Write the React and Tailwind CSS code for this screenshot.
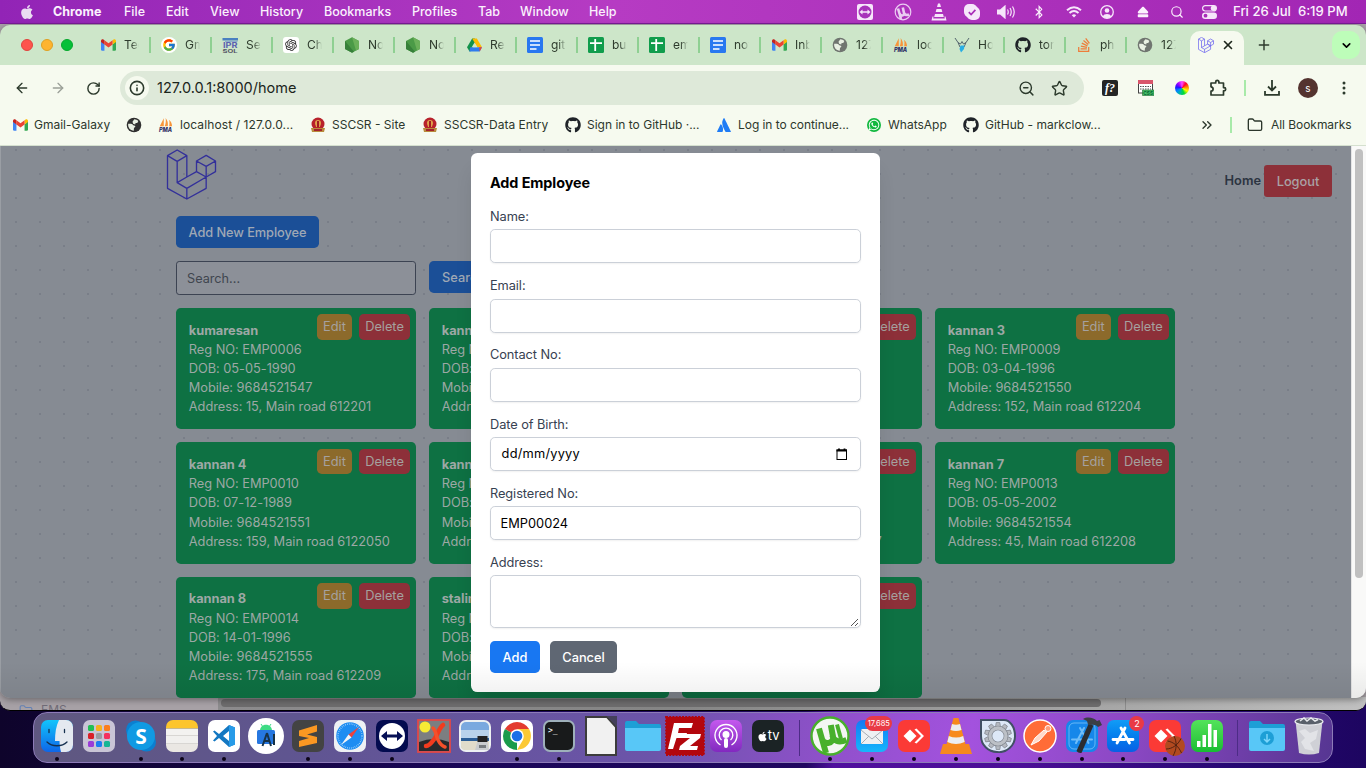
import React from "react";
import { FaApple, FaGithub, FaStackOverflow, FaAtlassian, FaWhatsapp, FaBluetoothB, FaEject } from "react-icons/fa";
import { FcGoogle } from "react-icons/fc";
import { RiOpenaiFill } from "react-icons/ri";
import { ArrowLeft, ArrowRight, RotateCw, Info, ZoomOut, Star, Folder, Search, Plus, X, ChevronDown, ChevronsRight } from "lucide-react";

/* ---------- small brand icons ---------- */

const Gmail = () => (
  <svg viewBox="0 0 24 18" className="w-[15px] h-3">
    <path d="M0 2v14a2 2 0 0 0 2 2h3.500V8z" fill="#4285f4" />
    <path d="M24 2v14a2 2 0 0 1-2 2h-3.500V8z" fill="#34a853" />
    <path d="M18.500 1.200V8L24 4V2.500C24 .2 21.500-.8 19.700.4z" fill="#fbbc04" />
    <path d="M5.500 8V1.200L12 6l6.500-4.800V8L12 13z" fill="#ea4335" />
    <path d="M0 2.500V4l5.500 4V1.200L4.300.4C2.500-.8 0 .2 0 2.500z" fill="#c5221f" />
  </svg>
);

const Globe = ({ color = "#303030" }) => (
  <svg viewBox="0 0 16 16" className="w-4 h-4">
    <circle cx="8" cy="8" r="7.300" fill={color} />
    <path d="M2.200 6.800c1.500-.2 4.300-.3 4.600.9.200 1 2.300.3 2.500 1.600.2 1.100-1.300 1-1.400 2.200l-.1 2.200C4.300 13.700 1.600 10.600 2.200 6.800zM8.300 2.300c1.600.1 3 .7 4 1.800l-1 1.800H9.600L9.200 7.400 7.100 6.800 6.500 4.800z" fill="#e8efe2" />
  </svg>
);

const Pma = () => (
  <svg viewBox="0 0 18 16" className="w-[17px] h-4">
    <path d="M6.500.5 2 9.500h4.500zM8.500 0c2.500 3 3 6 2.500 9.500H7.500C8.700 6.500 9.200 3 8.500 0zM12.500 2c2.300 2 3.300 4.500 3.300 7.500H12.500c.5-2.500.6-5 0-7.500z" fill="#f7953a" />
    <text x="1" y="15.800" fontSize="6.500" fontWeight="800" fontStyle="italic" fontFamily="Inter, sans-serif" fill="#2b2d63" textLength="15" lengthAdjust="spacingAndGlyphs">PMA</text>
  </svg>
);

const Node = () => (
  <svg viewBox="0 0 16 16" className="w-4 h-4">
    <path d="M8 .2 15 4v8l-7 3.800L1 12V4z" fill="#4b9a47" />
    <path d="M8 .2 15 4v8l-3 1.600z" fill="#6bb05a" />
    <path d="M1 4v8l7 3.800 2-1z" fill="#37803a" />
  </svg>
);

const Drive = () => (
  <svg viewBox="0 0 16 14" className="w-[15px] h-[14px]">
    <path d="M5.500 0h2.700L10 3 4.500 13.500 2.700 14 0 9.500z" fill="#12924a" />
    <path d="M5.500 0h5L16 9.500h-5z" fill="#fbbc04" />
    <path d="M3.500 9.500H16L13.500 14h-11z" fill="#2f7bed" />
    <path d="M13 9.500h3L13.500 14z" fill="#ea4335" />
    <path d="M8 4.300 11 9.500H5z" fill="#cfe7cb" />
  </svg>
);

const Docs = () => (
  <svg viewBox="0 0 16 16" className="w-4 h-4">
    <rect width="16" height="16" rx="1.500" fill="#2878f0" />
    <path d="M3 4h10M3 8h10M3 12h6.500" stroke="#fff" strokeWidth="1.700" />
  </svg>
);

const Sheets = () => (
  <svg viewBox="0 0 16 16" className="w-4 h-4">
    <rect width="16" height="16" rx="1.500" fill="#109d4c" />
    <path d="M2 6.200h12M7.200 2v12" stroke="#fff" strokeWidth="1.800" />
  </svg>
);

const Ipr = () => (
  <svg viewBox="0 0 16 16" className="w-4 h-4">
    <path d="M.5 1H16v2.500H.5z" fill="#4a80c0" /><path d="M3 4.200h12.500v.8H3z" fill="#7a9ccb" />
    <text x="1" y="11.200" fontSize="7" fontWeight="700" fontFamily="Inter, sans-serif" fill="#5a62b0" textLength="14.500" lengthAdjust="spacingAndGlyphs">IPR</text>
    <text x="0.500" y="15.900" fontSize="5" fontWeight="700" fontFamily="Inter, sans-serif" fill="#556" textLength="15" lengthAdjust="spacingAndGlyphs">SOL</text>
  </svg>
);

const Gpt = () => (
  <span className="flex items-center justify-center w-4 h-4 rounded-[3px] bg-white"><RiOpenaiFill className="w-[14px] h-[14px] text-[#222]" /></span>
);

const GoogleRound = () => (
  <span className="flex items-center justify-center w-4 h-4 rounded-full bg-white"><FcGoogle className="w-[14px] h-[14px]" /></span>
);

const Github = () => <FaGithub className="w-4 h-4 text-[#1f2328]" />;
const Stack = () => <FaStackOverflow className="w-4 h-4 text-[#ee7d3a]" />;

const Hoppers = () => (
  <svg viewBox="0 0 16 16" className="w-4 h-4" fill="none">
    <path d="M1 1l3 4.500L6 10M15 1l-3 4.500L10 10M4 5.500 6.500 7 8 4.500 9.500 7 12 5.500" stroke="#54656e" strokeWidth="1" />
    <path d="M6.500 8.500h4L10 12l-3 3.500L5.500 12z" fill="#28aee4" />
  </svg>
);

const Emblem = () => (
  <svg viewBox="0 0 16 16" className="w-4 h-4">
    <circle cx="8" cy="7" r="6.500" fill="#b8222b" />
    <path d="M5 6a3 3 0 0 1 6 0c0 2-1 2.500-1 4H6C6 8.500 5 8 5 6z" fill="#e0a24a" />
    <path d="M7 4h2v6H7z" fill="#a31a22" />
    <path d="M1 11h14l-1 4H2z" fill="#b98b3c" />
    <path d="M4 12h8v2H4z" fill="#a3222a" />
  </svg>
);

const LaravelMark = ({ className, color, width }) => (
  <svg viewBox="498 26 152 153" className={className} fill="none" stroke={color} strokeWidth={width} strokeLinejoin="round">
    <path d="M531 29 560 46 531 63 502 46zM502 46V144L560 176 618 144V110M531 63V127L560 144V176M560 46V110L531 127M560 110 589 94 618 110 560 144M618 45 646 62V94L618 110 589 94V62zM589 62 618 78 646 62M618 78V110" />
  </svg>
);

/* ---------- menu bar ---------- */

const menus = [
  ["File", "w-[42px]"], ["Edit", "w-11"], ["View", "w-[50px]"], ["History", "w-16"], ["Bookmarks", "w-[88px]"],
  ["Profiles", "w-[66px]"], ["Tab", "w-[42px]"], ["Window", "w-[69px]"], ["Help", "w-10"],
];

const TeamTray = () => (
  <svg viewBox="0 0 16 16" className="w-4 h-4">
    <rect width="16" height="16" rx="2" fill="#f6e6fa" />
    <circle cx="8" cy="8" r="6.500" fill="#a832ba" />
    <path d="M2.500 8 5.500 5.500v1.700h5V5.500l3 2.500-3 2.500V8.800h-5v1.700z" fill="#f6e6fa" />
  </svg>
);
const TorrentTray = () => (
  <svg viewBox="0 0 18 18" className="w-[18px] h-[18px]">
    <circle cx="9" cy="9" r="7.800" fill="none" stroke="#eacdf2" strokeWidth="1.200" />
    <path d="M4 5.500 5.500 10.500c1 3 5 2.500 4.500-.5L8.800 4.500M10 10c.8 2 2.500 2.500 5 1.500M5.500 10.500 7 16" fill="none" stroke="#eacdf2" strokeWidth="2.600" />
  </svg>
);
const VlcTray = () => (
  <svg viewBox="0 0 16 18" className="w-4 h-[18px]">
    <path d="M7 .5h2l1 3.500H6zM5.500 6h5l.8 3H4.700zM4 11h8l.8 3H3.200zM1.500 13.500h1L2.200 15.500h11.600l-.3-2h1l1 4H.5z" fill="#f6e6fa" />
  </svg>
);
const SkypeTray = () => (
  <svg viewBox="0 0 16 16" className="w-4 h-4">
    <rect width="13" height="13" rx="5" fill="#f6e6fa" /><rect x="3" y="3" width="13" height="13" rx="5" fill="#f6e6fa" /><circle cx="8" cy="8" r="7.200" fill="#f6e6fa" />
    <path d="m4.800 8.200 2.300 2.300 4.300-4.600" stroke="#a92db8" strokeWidth="1.700" fill="none" />
  </svg>
);
const VolumeTray = () => (
  <svg viewBox="0 0 19 14" className="w-[19px] h-[14px]" fill="none" stroke="#f6e6fa" strokeWidth="1.200"><path d="M.5 5v4h3L8 13V1L3.500 5z" fill="#f6e6fa" /><path d="M10.500 4.500q1.500 2.500 0 5M13 3q2.500 4 0 8M15.500 1.500q3.500 5.500 0 11" /></svg>
);
const UserTray = () => (
  <svg viewBox="0 0 14 14" className="w-[14px] h-[14px]"><circle cx="7" cy="7" r="6.300" fill="none" stroke="#f6e6fa" strokeWidth="1.300" /><circle cx="7" cy="5.500" r="2.300" fill="#f6e6fa" /><path d="M2.800 11.500c1-3.300 7.400-3.300 8.400 0-2.400 2-6 2-8.400 0z" fill="#f6e6fa" /></svg>
);
const ControlTray = () => (
  <svg viewBox="0 0 15 14" className="w-[15px] h-[14px]">
    <rect x=".6" y=".6" width="13.800" height="5.400" rx="2.700" fill="none" stroke="#f6e6fa" strokeWidth="1.200" /><circle cx="11.500" cy="3.300" r="2.700" fill="#f6e6fa" />
    <rect y="7.500" width="15" height="6.400" rx="3.200" fill="#f6e6fa" /><circle cx="3.500" cy="10.700" r="1.900" fill="#a92db8" />
  </svg>
);
const WifiTray = () => (
  <svg viewBox="0 0 16 12" className="w-4 h-3" fill="none" stroke="#f6e6fa" strokeWidth="2"><path d="M1 4.200q7-6 14 0M3.500 7q4.500-4 9 0" /><path d="M8 11.500 5.800 9.200q2.200-1.800 4.400 0z" fill="#f6e6fa" stroke="none" /></svg>
);

const tray = [
  [<TeamTray />, "w-[38px]"], [<TorrentTray />, "w-[38px]"], [<VlcTray />, "w-[34px]"], [<SkypeTray />, "w-8"],
  [<VolumeTray />, "w-9"], [<FaBluetoothB className="w-3 h-[14px]" />, "w-[30px]"], [<WifiTray />, "w-10"], [<UserTray />, "w-[26px]"],
  [<FaEject className="w-3 h-3" />, "w-[46px]"], [<Search className="w-[14px] h-[14px]" />, "w-[22px]"], [<ControlTray />, "w-[42px]"],
];

function MenuBar() {
  return (
    <div className="flex items-center h-6 shrink-0 bg-linear-to-r from-[#9224b6] via-[#b63bc3] via-45% to-[#a226b4] border-b border-[#7a1b98] text-[#fbf1fd] text-[12.500px] font-medium whitespace-nowrap">
      <FaApple className="ml-[19px] w-4 h-4 shrink-0 text-[#eadcf2]" />
      <span className="ml-[18px] w-[71px] font-bold pt-px">Chrome</span>
      {menus.map(([t, w]) => <span key={t} className={`${w} shrink-0 pt-px`}>{t}</span>)}
      <div className="flex items-center ml-auto pt-px shrink-0">
        {tray.map(([icon, w], i) => <span key={i} className={`${w} flex justify-center shrink-0`}>{icon}</span>)}
      </div>
      <span className="ml-[3px] w-[114px] mr-[19px] pt-px text-[13.100px] whitespace-pre">Fri 26 Jul  6:19 PM</span>
    </div>
  );
}

/* ---------- browser chrome ---------- */

const tabs = [
  [Gmail, "Tec"], [GoogleRound, "Gm"], [Ipr, "Ser"], [Gpt, "Cha"], [Node, "No"], [Node, "No"], [Drive, "Res"], [Docs, "git"],
  [Sheets, "bug"], [Sheets, "em"], [Docs, "not"], [Gmail, "Inb"], [() => <Globe color="#707570" />, "127"], [Pma, "loc"], [Hoppers, "Ho"],
  [Github, "tom"], [Stack, "php"], [() => <Globe color="#707570" />, "127"],
];

function TabStrip() {
  return (
    <div className="flex items-center h-10 shrink-0 bg-[#cde6c9] pl-[21px] text-xs text-[#2e3b2d]">
      <div className="flex gap-2 w-[69px] shrink-0">
        <span className="w-3 h-3 rounded-full bg-[#fd544d] border border-[#e0443e]" />
        <span className="w-3 h-3 rounded-full bg-[#feb42f] border border-[#dfa023]" />
        <span className="w-3 h-3 rounded-full bg-[#06c038] border border-[#05a82c]" />
      </div>
      {tabs.map(([Icon, label], i) => (
        <div key={i} className={`flex items-center w-[61px] h-4 shrink-0 pl-[10px] ${i < 17 ? "border-r-2 border-[#8fd092]" : "pr-0.5"}`}>
          <span className="flex justify-center w-4 shrink-0"><Icon /></span>
          <span className="ml-2 w-[15px] overflow-hidden whitespace-nowrap mask-r-from-50%">{label}</span>
        </div>
      ))}
      <div className="flex items-center self-end w-[54px] h-[34px] ml-0.5 pb-1.5 pl-2 shrink-0 bg-[#f6faef] rounded-t-[10px]">
        <LaravelMark className="w-4 h-4" color="#6b63f0" width={7} />
        <X className="w-3.5 h-3.5 ml-[7px] text-[#1d261c]" strokeWidth={2.800} />
      </div>
      <Plus className="w-4 h-4 ml-3" strokeWidth={2.200} />
      <span className="flex items-center justify-center w-7 h-7 ml-auto mr-[6px] rounded-[10px] bg-[#bdfdb9]">
        <ChevronDown className="w-[13px] h-[13px] text-black" strokeWidth={3} />
      </span>
    </div>
  );
}

function Toolbar() {
  return (
    <div className="flex items-center h-[46px] shrink-0 bg-[#f6faef] pl-[14px] text-[#2c3a2c]">
      <ArrowLeft className="w-4 h-4" />
      <ArrowRight className="w-4 h-4 ml-5 text-[#9ba098]" />
      <RotateCw className="w-[15px] h-[15px] ml-5" strokeWidth={2.300} />
      <div className="flex items-center w-[964px] h-[34px] ml-[19px] pl-[5px] pr-4 rounded-full bg-[#dee9d9] shrink-0">
        <span className="flex items-center justify-center w-6 h-6 rounded-full bg-[#f6faef]"><Info className="w-4 h-4" strokeWidth={2.400} /></span>
        <span className="ml-2 text-[14.500px] text-[#1b251b]">127.0.0.1:8000/home</span>
        <ZoomOut className="w-[17px] h-[17px] ml-auto" />
        <Star className="w-[17px] h-[17px] ml-4" />
      </div>
      <span className="flex items-center justify-center w-4 h-4 ml-[18px] rounded-xs bg-[#252525] text-white text-[12px] font-bold italic font-['Liberation_Serif',serif]">f?</span>
      <svg viewBox="0 0 16 16" className="w-4 h-4 ml-5 shrink-0">
        <rect x=".5" y=".5" width="14" height="12.500" fill="#fff" stroke="#444" /><path d="M0 0h15v4H0z" fill="#d9566c" /><path d="M2 6.500h11M2 9h11" stroke="#555" strokeWidth="1.200" strokeDasharray="1.500 1" />
        <path d="M4.500 10H16v5.500H4.500z" fill="#4fc26a" stroke="#176b30" strokeWidth=".6" /><text x="5.200" y="14.700" fontSize="5.200" fontWeight="700" fontFamily="Inter, sans-serif" fill="#063" textLength="10" lengthAdjust="spacingAndGlyphs">CSS</text>
      </svg>
      <span className="w-[14px] h-[14px] ml-[21px] rounded-full shrink-0 bg-[conic-gradient(#ff4dff,#f03,#f80,#ff0,#0d3,#0b9,#08f,#21f,#a0f,#ff4dff)]" />
      <svg viewBox="0 0 18 18" className="w-[18px] h-[18px] ml-5 shrink-0" fill="none" stroke="currentColor" strokeWidth="1.700" strokeLinejoin="round">
        <path d="M2 4h4.700V3a1.600 1.600 0 0 1 3.200 0v1h4.600v4.600h.6a1.600 1.600 0 0 1 0 3.200h-.6V16H2v-3.800c2.800-.3 2.800-4.100 0-4.400z" />
      </svg>
      <span className="w-0.5 h-4 ml-[17px] bg-[#a8eaa9] shrink-0" />
      <svg viewBox="0 0 16 16" className="w-4 h-4 ml-[18px] shrink-0" fill="none" stroke="currentColor" strokeWidth="1.800"><path d="M8 0v10M4 6.500l4 4 4-4M1 11v3.800h14V11" /></svg>
      <span className="flex items-center justify-center w-5 h-5 ml-[18px] rounded-full bg-[#54332f] text-white text-[10px] shrink-0">s</span>
      <svg viewBox="0 0 4 16" className="w-1 h-4 ml-6 shrink-0" fill="currentColor"><circle cx="2" cy="3" r="1.500" /><circle cx="2" cy="8" r="1.500" /><circle cx="2" cy="13" r="1.500" /></svg>
    </div>
  );
}

const bookmarks = [
  [Gmail, "Gmail-Galaxy", "w-[114px]"],
  [() => <Globe />, "", "w-8"],
  [Pma, "localhost / 127.0.0...", "w-[152px] tracking-[0.1px]"],
  [Emblem, "SSCSR - Site", "w-28"],
  [Emblem, "SSCSR-Data Entry", "w-[143px]"],
  [Github, "Sign in to GitHub ·...", "w-[151px]"],
  [() => <FaAtlassian className="w-[14px] h-[14px] text-[#1f7cf5]" />, "Log in to continue...", "w-[150px] tracking-[-0.05px]"],
  [() => <span className="flex items-center justify-center w-[14px] h-[14px] rounded-full bg-[#10b83e]"><FaWhatsapp className="w-3 h-3 text-white" /></span>, "WhatsApp", "w-[97px]"],
  [Github, "GitHub - markclow...", "w-[150px]"],
];

function BookmarkBar() {
  return (
    <div className="flex items-center h-[35px] pb-[7px] shrink-0 bg-[#f6faef] border-b border-[#d5e0cf] pl-3 text-xs text-[#2c372c]">
      {bookmarks.map(([Icon, label, w], i) => (
        <span key={i} className={`${w} flex items-center shrink-0 whitespace-nowrap`}>
          <span className="flex justify-center w-4 mr-1.5 shrink-0"><Icon /></span>{label}
        </span>
      ))}
      <ChevronsRight className="w-4 h-4 ml-auto shrink-0" />
      <span className="w-0.5 h-4 ml-[15px] mr-px bg-[#a8eaa9] shrink-0" />
      <Folder className="w-4 h-4 ml-[14px] shrink-0" />
      <span className="w-[81px] ml-2 mr-[14px] whitespace-nowrap tracking-[-0.05px]">All Bookmarks</span>
    </div>
  );
}

/* ---------- employee page ---------- */

const employees = [
  ["kumaresan", "EMP0006", "05-05-1990", "9684521547", "15, Main road 612201"],
  ["kannan 1", "EMP0007", "01-04-1996", "9684521548", "150, Main road 612202"],
  ["kannan 2", "EMP0008", "02-04-1996", "9684521549", "5, Main road 612203"],
  ["kannan 3", "EMP0009", "03-04-1996", "9684521550", "152, Main road 612204"],
  ["kannan 4", "EMP0010", "07-12-1989", "9684521551", "159, Main road 6122050"],
  ["kannan 5", "EMP0011", "08-12-1989", "9684521552", "160, Main road 612206"],
  ["kannan 6", "EMP0012", "05-05-2001", "9684521553", "65, Main road 612207"],
  ["kannan 7", "EMP0013", "05-05-2002", "9684521554", "45, Main road 612208"],
  ["kannan 8", "EMP0014", "14-01-1996", "9684521555", "175, Main road 612209"],
  ["stalin", "EMP0015", "15-01-1996", "9684521556", "176, Main road 612210"],
  ["stalin 2", "EMP0016", "16-01-1996", "9684521557", "177, Main road"],
];

function Card({ data: [name, reg, dob, mobile, address] }) {
  return (
    <div className="relative h-[121.600px] p-[12.800px] rounded-[4.800px] bg-[#0e7143] text-[#9da8a5] leading-[19.200px] tracking-[-0.03px] whitespace-nowrap">
      <p className="font-bold">{name}</p>
      <p>Reg NO: {reg}</p>
      <p>DOB: {dob}</p>
      <p>Mobile: {mobile}</p>
      <p>Address: {address}</p>
      <div className="absolute top-[6.400px] right-[6.100px] flex gap-[7px] text-[#a5a19f] text-center">
        <span className="w-[35.200px] pt-[3px] h-[25.600px] rounded-[4.800px] bg-[#8c6a2b]">Edit</span>
        <span className="w-[51px] pt-[3px] h-[25.600px] rounded-[4.800px] bg-[#8d3039]">Delete</span>
      </div>
    </div>
  );
}

const Field = ({ label, children }) => (
  <div className="h-[69.200px]">
    <div className="h-[22.400px] leading-[19.200px] text-[#374151] tracking-[-0.08px]">{label}</div>
    <div className="flex items-center justify-between h-[34px] px-[9.600px] rounded-[4.800px] border border-[#cbd0d8] shadow-[0_1px_2px_rgba(0,0,0,0.06)] text-black">{children}</div>
  </div>
);

function Modal() {
  return (
    <div className="absolute left-[471px] top-[7px] w-[409px] h-[539px] px-[19px] pt-[19.200px] bg-white rounded-[6.400px] shadow-[0_16px_20px_-4px_rgba(0,0,0,0.12)]">
      <h2 className="h-[34.800px] leading-[21.600px] text-[14.400px] tracking-[-0.08px] font-bold text-black">Add Employee</h2>
      <Field label="Name:" />
      <Field label="Email:" />
      <Field label="Contact No:" />
      <Field label="Date of Birth:">
        <span className="tracking-[0.220px] ml-px">dd/mm/yyyy</span>
        <svg viewBox="0 0 12 12" className="w-3 h-3 mr-0.5" fill="none" stroke="#000"><rect x="1" y="2" width="9.500" height="9.500" /><path d="M.5 2.500h10.500M3 .5v2M8.500.5v2" strokeWidth="1.800" /></svg>
      </Field>
      <Field label="Registered No:"><span>EMP00024</span></Field>
      <div className="h-[22.400px] leading-[19.200px] text-[#374151] tracking-[-0.08px]">Address:</div>
      <div className="flex items-end justify-end h-[53px] rounded-[4.800px] border border-[#cbd0d8] shadow-[0_1px_2px_rgba(0,0,0,0.06)]">
        <svg viewBox="0 0 10 10" className="w-[10px] h-[10px]" stroke="#555" strokeWidth="1"><path d="M1 9 8 2M5 9l3-3" /></svg>
      </div>
      <div className="flex gap-[10px] mt-[12.600px] text-white font-medium">
        <span className="flex items-center justify-center w-[50px] h-8 pt-px rounded-[4.800px] bg-[#1877f2]">Add</span>
        <span className="flex items-center justify-center w-[67px] h-8 pt-px rounded-[4.800px] bg-[#5f6773]">Cancel</span>
      </div>
    </div>
  );
}

function EmployeePage() {
  return (
    <div className="relative flex h-[552px] shrink-0 text-[12.800px]">
      <div className="w-[1351px] h-full overflow-hidden border-l border-[#9a9ea4] bg-[#868b93] bg-[radial-gradient(circle,#797e88_1px,transparent_1.400px)] bg-[length:24px_24px] bg-position-[3px_-8px]">
        <header className="flex h-[70px]">
          <LaravelMark className="w-[51px] h-[51px] ml-[165px] mt-[2.500px]" color="#33309a" width={4} />
          <span className="mt-[25px] ml-auto mr-[3px] font-semibold text-[12.800px] text-[#2c3441]">Home</span>
          <span className="flex items-center justify-center w-[68px] h-8 pt-px mt-[19px] mr-[19px] rounded-[3.200px] bg-[#8d3039] text-[#aaa2a6] font-medium">Logout</span>
        </header>
        <main className="w-[999px] ml-[175px]">
          <div className="flex items-center justify-center w-[143px] h-8 pt-px rounded-[4.800px] bg-[#1b4f97] text-[#9fa8b5] font-medium tracking-[-0.08px]">Add New Employee</div>
          <div className="flex mt-[12.800px] gap-[13px]">
            <div className="flex items-center w-60 h-[34px] pt-0.5 px-[10px] rounded-[3.200px] border border-[#3c4352] bg-[#8c9098] text-[#40464f] text-[12.700px]">Search...</div>
            <div className="flex items-center w-[70px] h-8 pt-px pl-[13px] rounded-[4.800px] bg-[#1b4f97] text-[#9fa8b5] font-medium">Search</div>
          </div>
          <div className="grid grid-cols-4 gap-[12.800px] mt-[13.050px]">
            {employees.map((e) => <Card key={e[1]} data={e} />)}
          </div>
        </main>
      </div>
      <div className="w-[15px] bg-[#f9f9f8] border-l border-[#e4e4e4] pl-[3px] pt-[3px]">
        <div className="w-2 h-[429px] rounded-full bg-[#c0c0c0]" />
      </div>
      <Modal />
      <div className="absolute inset-x-0 bottom-0 h-9 bg-linear-to-b from-transparent to-black/6 pointer-events-none" />
    </div>
  );
}

/* ---------- dock ---------- */

const Tile = ({ className = "", children }) => (
  <span className={`flex items-center justify-center w-8 h-8 rounded-[7px] overflow-hidden ${className}`}>{children}</span>
);

const Finder = () => (
  <Tile><svg viewBox="0 0 32 32"><defs><linearGradient id="fd" x2="0" y2="1"><stop stopColor="#12c4fb" /><stop offset="1" stopColor="#0e66e8" /></linearGradient></defs><path d="M0 0h32v32H0z" fill="url(#fd)" /><path d="M18 0h14v32H20c-1-4-1.500-7-1.500-11H14c0-8 1-15 4-21z" fill="#e4e9f0" /><path d="M8 9.500v3M23.500 9.500v3M6 22c5 5 15 5 20 0" stroke="#15304f" strokeWidth="1.300" fill="none" strokeLinecap="round" /></svg></Tile>
);
const Launchpad = () => (
  <Tile className="bg-[#c9c5d6]"><span className="grid grid-cols-3 gap-x-[2.500px] gap-y-[2.500px]">
    {["bg-[#20bf55]", "bg-[#f6b01e]", "bg-[#fb7d1e]", "bg-[#d92027]", "bg-[#9a9da3]", "bg-[#f5315f]", "bg-[#9a3cd8]", "bg-[#1d7df0]", "bg-[#16b694]"].map((c) => <i key={c} className={`w-[5.500px] h-[5.500px] rounded-[1.500px] ${c}`} />)}
  </span></Tile>
);
const Skype = () => (
  <svg viewBox="0 0 32 32" className="w-8 h-8"><circle cx="10.500" cy="10" r="9.500" fill="#0b7fd0" /><circle cx="21.500" cy="22" r="9.500" fill="#0b7fd0" /><circle cx="16" cy="16" r="14" fill="#109ae3" /><text x="16" y="23.500" textAnchor="middle" fontSize="21" fontWeight="700" fontFamily="Open Sans, sans-serif" fill="#fff">S</text></svg>
);
const Notes = () => <Tile className="bg-[linear-gradient(#fdc52d_0_25%,#c9b98c_25%_28%,#f3f2f0_28%_48%,#d8d6d3_48%_50%,#f1f0ee_50%_72%,#d8d6d3_72%_74%,#eae7e3_74%)]" />;
const Code = () => (
  <Tile className="bg-white"><svg viewBox="0 0 32 32"><path d="m21 5 6 2.500v17L21 27 11 18l-4.500 3.500L5 20.500 9 16l-4-4.500 1.500-1L11 14zM21 11l-6 5 6 5z" fill="#1478c2" fillRule="evenodd" /><path d="m21 5 6 2.500v17L21 27z" fill="#279be8" /></svg></Tile>
);
const Studio = () => (
  <svg viewBox="0 0 36 36" className="w-9 h-9"><circle cx="18" cy="18" r="18" fill="#fff" /><rect x="9" y="12" width="18" height="14" rx="1.500" fill="#2677e0" /><path d="M12 12c1-7 11-7 12 0z" fill="#3ddc84" /><path d="m13 6 2 3M23 6l-2 3" stroke="#3ddc84" /><path d="m19 15-4.500 13M19 15l4 13M16 23h6M26 16v11" stroke="#173247" strokeWidth="2" fill="none" /></svg>
);
const Sublime = () => <Tile className="bg-[#434343]"><svg viewBox="0 0 32 32"><path d="M7 10.500 25 5v6.500L15 14.500l10 2.500v6L7 27v-6l10-3L7 16z" fill="#fb9822" /></svg></Tile>;
const Safari = () => (
  <Tile className="bg-[#eef1f4]"><svg viewBox="0 0 32 32"><circle cx="16" cy="16" r="13.800" fill="#1e8df2" /><circle cx="16" cy="16" r="12" fill="none" stroke="#bfe2fb" strokeWidth="1.500" strokeDasharray=".6 1.300" /><path d="m25 7-7.500 10.500L14.500 14.500z" fill="#f0413c" /><path d="m7 25 7.500-10.500 3 3z" fill="#f3f5f8" /></svg></Tile>
);
const TeamViewer = () => <Tile className="bg-[#030b4f]"><svg viewBox="0 0 32 32"><circle cx="16" cy="16" r="13" fill="#fff" /><path d="m5 16 6-5v3.500h10V11l6 5-6 5v-3.500H11V21z" fill="#061056" /></svg></Tile>;
const XQuartz = () => (
  <svg viewBox="0 0 34 34" className="w-[34px] h-[34px]"><rect x="1" y="1" width="32" height="32" fill="#7c7e81" stroke="#e04848" strokeWidth="1.800" /><path d="M2 23q15-6 30 0v9H2z" fill="#2a2a2c" /><circle cx="8" cy="8" r="5.500" fill="#f7ea35" /><path d="M26 6c-4 3-5 9-8 13s-5 8-9 8" stroke="#f23b1e" strokeWidth="4.500" fill="none" strokeLinecap="round" /><path d="M16 9c3 3 3 8 5 12s4 6 7 7" stroke="#f6502a" strokeWidth="3.500" fill="none" strokeLinecap="round" /></svg>
);
const Preview = () => (
  <Tile className="bg-[#edf0f2]"><svg viewBox="0 0 32 32" className="w-8 h-8"><rect x="2" y="2" width="28" height="28" rx="5" fill="#7aa9df" /><path d="M2 10h28v8H2z" fill="#b8d2eb" /><path d="M2 18h28v3H2z" fill="#2a5d96" /><path d="M2 21h28v9H6q-4 0-4-4z" fill="#e1dccb" /><path d="M19 20h9l2 10H16z" fill="#c9cccf" /><path d="M18.500 16h10v6h-10z" fill="#222" /><path d="M20 25h7v3h-7z" fill="#777c80" /></svg></Tile>
);
const Chrome = () => (
  <Tile className="bg-white"><svg viewBox="0 0 32 32"><path d="M16 16 3.900 9A14 14 0 0 1 28.100 9z" fill="#e33b2e" /><path d="M16 16v14A14 14 0 0 1 3.900 9z" fill="#1a9b4b" /><path d="M16 9h12.100a14 14 0 0 1-6 19.500L16 30l6.200-10.600z" fill="#fcc934" /><circle cx="16" cy="16" r="6.800" fill="#fff" /><circle cx="16" cy="16" r="5.300" fill="#1a6fe8" /></svg></Tile>
);
const Terminal = () => <Tile className="bg-[#181a1b] border-2 border-[#9eb0ba]"><svg viewBox="0 0 28 28"><text x="3" y="11" fontSize="8" fontFamily="DejaVu Sans Mono, monospace" fill="#fff">&gt;_</text></svg></Tile>;
const Libre = () => <svg viewBox="0 0 32 40" className="w-8 h-10"><path d="M1 1h21l9 10v28H1z" fill="#f1f1f1" stroke="#3c3c3c" strokeWidth="2" /><path d="M22 0h10v11z" fill="#44405a" /></svg>;
const FolderIcon = ({ down }) => (
  <svg viewBox="0 0 38 32" className="w-[38px] h-8"><path d="M1 3q0-2 2-2h9l3 3h20q2 0 2 2v8H1z" fill="#1d9fd6" /><path d="M1 8h36v21q0 2-2 2H3q-2 0-2-2z" fill="#58c7f7" />{down && <><circle cx="19" cy="18" r="7" fill="#1d9fd6" /><path d="M19 14v8M16 19l3 3 3-3" stroke="#7cd6fb" strokeWidth="1.500" fill="none" /></>}</svg>
);
const FileZilla = () => (
  <svg viewBox="0 0 40 40" className="w-10 h-10"><rect x="1" y="1" width="38" height="38" fill="#b3070d" stroke="#b3070d" strokeWidth="1.800" strokeDasharray="2 1.200" /><path d="M9 7h19l-1.500 5H14l-1 5h9l-1.500 5h-9L8 33H3z" fill="#fff" /><path d="M20 18h16l-1 4-10 8h8l-1 4H14l1-4 10-8h-6z" fill="#fff" /></svg>
);
const Podcasts = () => (
  <Tile className="bg-linear-to-b from-[#c458ee] to-[#8228bf]"><svg viewBox="0 0 32 32" fill="none" stroke="#fff" strokeWidth="1.400"><path d="M10.500 25a11 11 0 1 1 11 0M11.500 20a6.800 6.800 0 1 1 9 0" /><circle cx="16" cy="14.500" r="2.800" fill="#fff" /><path d="M16 20v6" strokeWidth="4" strokeLinecap="round" /></svg></Tile>
);
const AppleTv = () => <Tile className="bg-[#1b2325] text-white text-[13px]"><FaApple className="w-[11px] h-[11px] shrink-0" /><span className="leading-none mb-0.5">tv</span></Tile>;
const Torrent = () => (
  <svg viewBox="0 0 40 40" className="w-10 h-10"><circle cx="20" cy="20" r="18.500" fill="#f4f6f3" stroke="#48b02c" strokeWidth="2.400" />
    <path d="M9 12.500 12 23c2 6.500 12.500 4.500 11-2.500L20.800 9M22.500 19.500c1 5.500 6 7.500 14 4.500M12 23l4 14" fill="none" stroke="#48b02c" strokeWidth="6" /><path d="M27 8.500 31 23" stroke="#48b02c" strokeWidth="4" /></svg>
);
const Mail = () => (
  <span className="relative"><Tile className="bg-linear-to-b from-[#1878f5] to-[#18b6fb]"><svg viewBox="0 0 32 32"><rect x="5" y="9" width="22" height="15" rx="1.500" fill="#eef0f2" /><path d="m5 10 11 9 11-9M5 24l8-8M27 24l-8-8" stroke="#a7adb4" fill="none" /></svg></Tile>
    <span className="absolute -top-1 left-[9px] w-[27px] h-[15px] rounded-full bg-[#e93a45] text-white text-[7.500px] leading-[15px] text-center">17,685</span></span>
);
const AnyDesk = ({ ball }) => (
  <span className="relative"><Tile className="bg-[#fb3a36] rounded-[3px]"><svg viewBox="0 0 32 32"><path d="m12 9.500 6.500 6.500-6.500 6.500L5.500 16z" fill="#fff" /><path d="m16.500 9.500 6.500 6.500-6.500 6.500 2 1L26 16l-7.500-7.500z" fill="#fff" /></svg></Tile>
    {ball && <svg viewBox="0 0 20 20" className="absolute left-4 top-4 w-5 h-5"><circle cx="10" cy="10" r="10" fill="#b24a20" /><path d="M2.500 5c6 1 11 5 14 12M1 13C7 13 13 9 16 2.500M9 0c3 6 3 13-1 20" stroke="#4a1e10" strokeWidth=".9" fill="none" /></svg>}</span>
);
const Vlc = () => <svg viewBox="0 0 32 36" className="w-8 h-9"><path d="M3 26h26l3 10H0z" fill="#f5891f" /><path d="M13.500 0h5L26 28q-10 5-20 0z" fill="#f78a1c" /><path d="m12 6-1.500 6q5.500 2 11 0L20 6q-4 1.500-8 0zM8.800 18l-1.500 6q8.500 4 17.400 0l-1.500-6q-7 3-14.400 0z" fill="#eceef0" /></svg>;
const Gear = () => (
  <svg viewBox="0 0 36 34" className="w-9 h-[34px]"><path d="M1 1h23a11 16 0 0 1 11 16 16 16 0 0 1-18 16A16 16 0 0 1 1 17z" fill="#dde8f7" stroke="#415064" strokeWidth="2" />
    <g transform="translate(18 17)">{[0, 36, 72, 108, 144, 180, 216, 252, 288, 324].map((a) => <path key={a} transform={`rotate(${a})`} d="M-2.500-9-1.800-13.500h3.600L2.500-9z" fill="#b5b9c0" stroke="#7d828b" strokeWidth=".7" />)}<circle r="8" fill="none" stroke="#7d828b" strokeWidth="4.600" /><circle r="8" fill="none" stroke="#bcc0c6" strokeWidth="3.400" /></g></svg>
);
const Postman = () => <svg viewBox="0 0 34 34" className="w-[34px] h-[34px]"><circle cx="17" cy="17" r="16" fill="#ff6c37" stroke="#fff" strokeWidth="1.500" /><path d="m8 26 4-7 9-8 3 2-8 9z" fill="#ffd9ca" stroke="#fff" /><circle cx="25" cy="9.500" r="3" fill="#ff9d7a" stroke="#fff" /></svg>;
const Aicon = ({ stroke, w }) => <path d="m18 8-8 15M14 8l8.500 15M6 19.500h12M21 19.500h5" stroke={stroke} strokeWidth={w} strokeLinecap="round" fill="none" />;
const Xcode = () => (
  <span className="relative"><Tile className="bg-[#1687ea]"><svg viewBox="0 0 32 32"><rect x="3" y="3" width="26" height="26" rx="5" fill="none" stroke="#67b7f6" /><Aicon stroke="#70bdf8" w={2} /></svg></Tile>
    <svg viewBox="0 0 28 38" className="absolute left-2 -top-1 w-7 h-[38px]"><path d="m14.500 8 5 1.500L7.500 37q-3 .5-5-2z" fill="#2b2d31" /><path d="M9 3c5-3 11-1 14 2l2.500-1L28 9l-4 2c-2-2-4-2.500-7-2l-3-.5L13 5z" fill="#3b3f45" /></svg></span>
);
const AppStore = () => (
  <span className="relative"><Tile className="bg-linear-to-b from-[#129cf6] to-[#0a5fe4]"><svg viewBox="0 0 32 32"><Aicon stroke="#fff" w={2.800} /></svg></Tile>
    <span className="absolute -top-1 left-[22px] w-[15px] h-[15px] rounded-full bg-[#e93a45] text-white text-[9px] leading-[15px] text-center">2</span></span>
);
const Stats = () => <Tile className="bg-linear-to-b from-[#52e35a] to-[#15bd32]"><svg viewBox="0 0 32 32" fill="#fff"><path d="M6 21h3.500v6H6zM11.500 15H15v12h-3.500zM17 4h3.500v23H17zM22.500 10H26v17h-3.500z" /></svg></Tile>;
const Trash = () => (
  <svg viewBox="0 0 30 38" className="w-[30px] h-[38px]"><path d="M1.500 4h27l-3.500 32q-10 3-20 0z" fill="#cfd0d6" /><path d="m5 14 6-2 5 4 8-3-2 9-6 4 4 8-9-2-4-7 4-4z" fill="#e2e3e7" /><ellipse cx="15" cy="4.500" rx="14" ry="3.500" fill="#59606b" stroke="#eceef2" strokeWidth="1.200" /><path d="m6 4 4-3 3 3 4-3 4 3 3-1.500" stroke="#e8eaee" fill="none" strokeWidth="1.500" /></svg>
);

const dockLeft = [[Finder, 1], [Launchpad], [Skype, 1], [Notes, 1], [Code, 1], [Studio], [Sublime, 1], [Safari, 1], [TeamViewer, 1], [XQuartz], [Preview], [Chrome, 1], [Terminal, 1], [Libre], [FolderIcon], [FileZilla], [Podcasts], [AppleTv]];
const dockMid = [[Torrent, 1], [Mail, 1], [AnyDesk, 1], [Vlc, 1], [Gear, 1], [Postman, 1], [Xcode, 1], [AppStore, 1], [() => <AnyDesk ball />, 1], [Stats, 1]];
const dockRight = [[() => <FolderIcon down />], [Trash]];

const DockGroup = ({ items }) => items.map(([Icon, running], i) => (
  <span key={i} className="flex flex-col items-center w-[41.850px] h-full shrink-0">
    <span className="flex items-center justify-center h-[46px]">
      <Icon />
    </span>
    <span className={`w-1 h-1 -mt-[2px] rounded-full ${running ? "bg-[#0c0418]" : ""}`} />
  </span>
));

function Dock() {
  return (
    <div className="absolute left-[33px] bottom-[5px] flex items-center w-[1300px] h-[51px] pl-[2px] rounded-[14px] border border-[#8d7bb8] bg-[linear-gradient(100deg,#5f587f_0%,#5f5590_20%,#6c54aa_48%,#9150cc_62%,#a352de_72%,#8c48c4_84%,#563692_100%)]">
      <DockGroup items={dockLeft} />
      <span className="w-px h-9 mx-[9.700px] bg-[#4d2c86]" />
      <DockGroup items={dockMid} />
      <span className="w-px h-9 mx-[8.500px] bg-[#4d2c86]" />
      <DockGroup items={dockRight} />
    </div>
  );
}

/* ---------- desktop ---------- */

export default function App() {
  return (
    <div className="flex flex-col w-[1366px] h-[768px] overflow-hidden font-['Inter',sans-serif] bg-black">
      <MenuBar />
      <div className="relative flex-1 bg-[linear-gradient(90deg,#0e042b_0%,#1a0658_35%,#20075f_59%,#500f9e_61%,#4b0f96_75%,#270873_90%,#1d0560_100%)]">
        <div className="absolute inset-x-0 top-0 flex h-[687px] items-end rounded-b-[10px] overflow-hidden bg-[#a7a1a6] border-b border-black">
          <div className="flex items-start w-[218px] h-[13px] pl-[19px] gap-2 overflow-hidden text-[12px] text-[#716d78]"><Folder className="w-3.5 h-3.5 mt-[7px] text-[#6482b5]" /><span className="mt-[5px] leading-[15px]">EMS</span></div>
          <div className="w-[907px] h-[13px] bg-linear-to-r from-[#8c8b8d] via-[#858585] to-[#a8a8a8] pl-[3px] pt-0.5"><div className="w-[880px] h-2 rounded-full bg-[#6d6c6d]" /></div>
          <div className="flex-1 h-[13px] border-l border-[#8b8b8b] bg-linear-to-r from-[#a8a8a8] to-[#c0c0c0]" />
        </div>
        <div className="absolute left-0 top-px flex flex-col w-[1366px] h-[673px] rounded-[10px] overflow-hidden shadow-[0_2px_6px_rgba(0,0,0,0.35)]">
          <TabStrip />
          <Toolbar />
          <BookmarkBar />
          <EmployeePage />
        </div>
        <Dock />
      </div>
    </div>
  );
}
